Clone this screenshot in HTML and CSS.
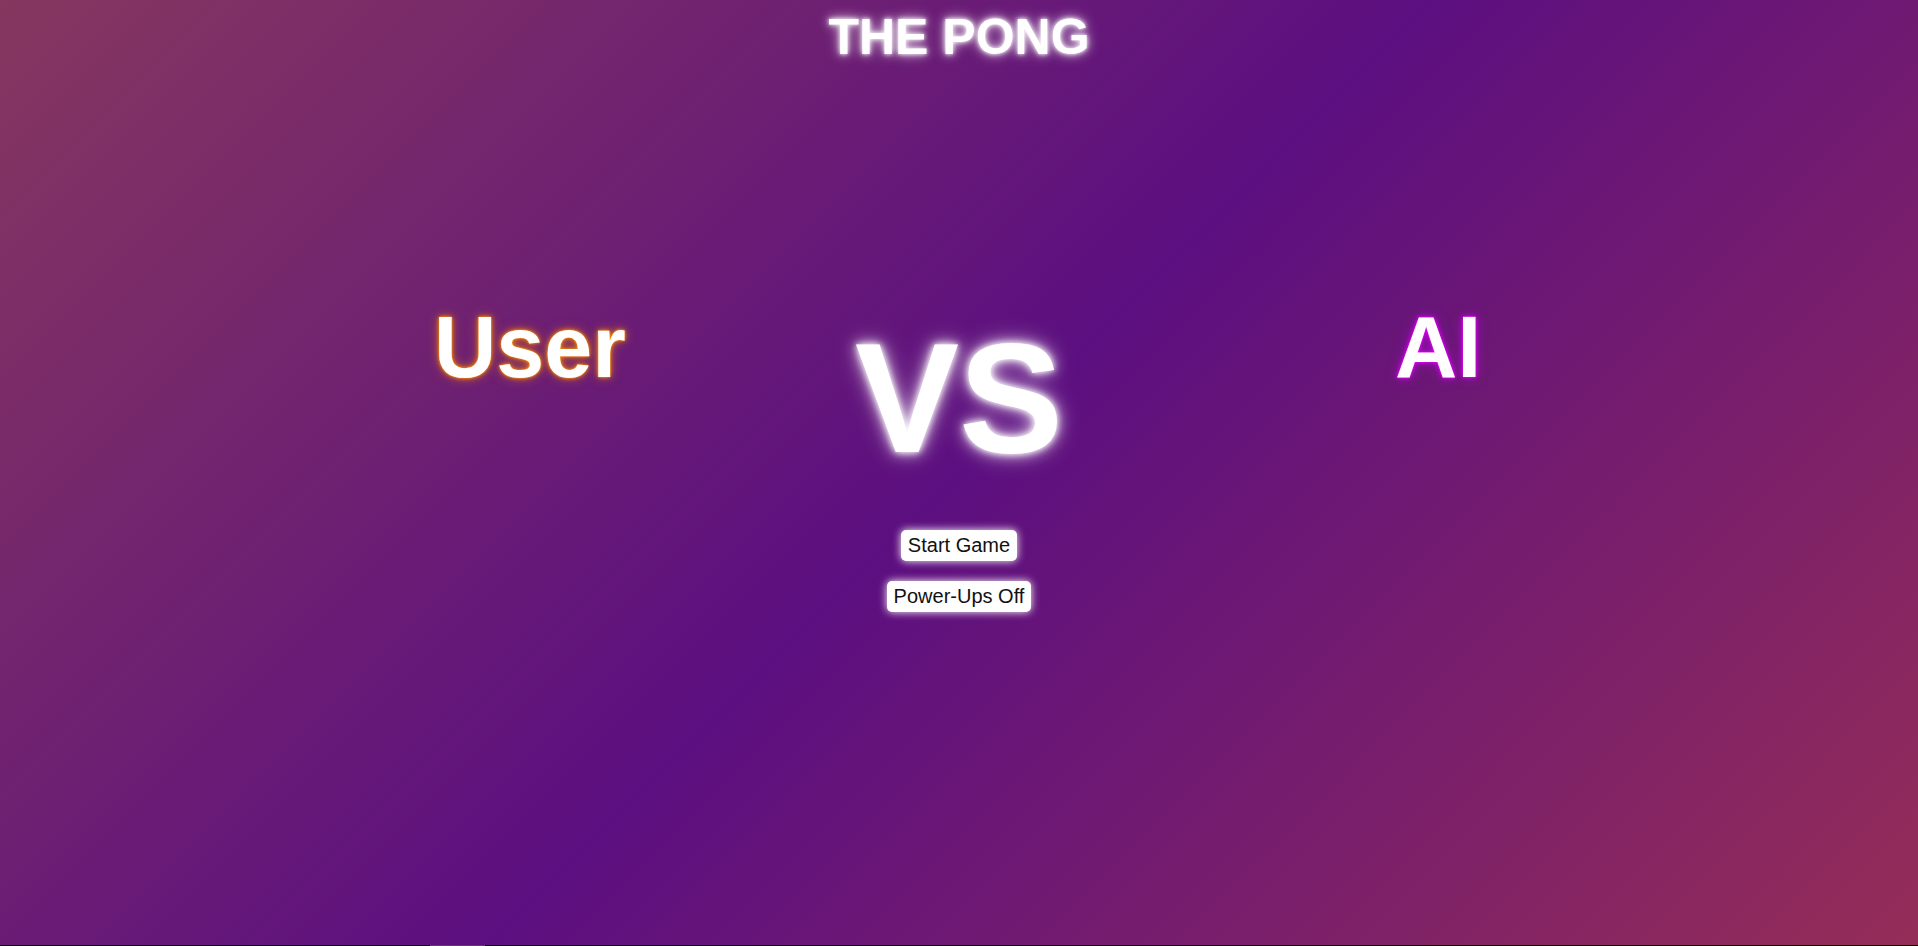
FILE: index.html
```html
<!DOCTYPE html>
<html lang="en">
<head>
<meta charset="utf-8">
<title>The Pong</title>
<link rel="stylesheet" href="styles.css">
</head>
<body>
  <h1 class="title">THE PONG</h1>
  <div class="versus">
    <div class="player player-user">User</div>
    <div class="vs">VS</div>
    <div class="player player-ai">AI</div>
  </div>
  <div class="controls">
    <button class="btn">Start Game</button>
    <button class="btn">Power-Ups Off</button>
  </div>
  <div class="spacer"></div>
  <div class="footer"><div class="footer-thumb"></div></div>
</body>
</html>
```

FILE: styles.css
```css
html, body {
  margin: 0;
  padding: 0;
  height: 100%;
}
body {
  display: flex;
  flex-direction: column;
  overflow: hidden;
  font-family: "Liberation Sans", Arial, sans-serif;
  color: #fff;
  background: linear-gradient(135deg, #86375f 0%, #5c0f80 50%, #952d58 100%);
}
.title {
  margin: 12px 0 0;
  font-size: 50px;
  line-height: 1;
  font-weight: bold;
  text-align: center;
  text-shadow: 0 0 4px #fff, 0 0 10px rgba(255,255,255,0.8), 0 0 16px rgba(255,255,255,0.4);
}
.versus {
  margin-top: 242px;
  display: grid;
  grid-template-columns: 1fr auto 1fr;
  align-items: start;
}
.player {
  font-size: 86.3px;
  line-height: 1;
  font-weight: bold;
}
.player-user {
  justify-self: end;
  margin-right: 229px;
  text-shadow: 0 0 2px #ff9a00, 0 0 5px #ff8a00, 0 0 12px rgba(255,136,0,0.55);
}
.player-ai {
  justify-self: start;
  margin-left: 332px;
  text-shadow: 0 0 2px #ff00ff, 0 0 5px #e000ff, 0 0 12px rgba(210,0,255,0.55);
}
.vs {
  padding-top: 16px;
  font-size: 156px;
  line-height: 1;
  font-weight: bold;
  text-shadow: 0 0 6px #fff, 0 0 14px rgba(255,255,255,0.9), 0 0 26px rgba(255,255,255,0.45);
}
.controls {
  margin-top: 54px;
  display: flex;
  flex-direction: column;
  align-items: center;
  gap: 20px;
}
.btn {
  font-family: "Liberation Sans", Arial, sans-serif;
  font-size: 20px;
  line-height: 23px;
  padding: 4px 7px;
  color: #111;
  background: #fff;
  border: none;
  border-radius: 5px;
  box-shadow: 0 0 8px #fff;
  cursor: pointer;
}
.spacer {
  flex: 1;
}
.footer {
  height: 1px;
  background: #000;
  display: flex;
}
.footer-thumb {
  margin-left: 430px;
  width: 55px;
  background: #4a4a4a;
}
```
